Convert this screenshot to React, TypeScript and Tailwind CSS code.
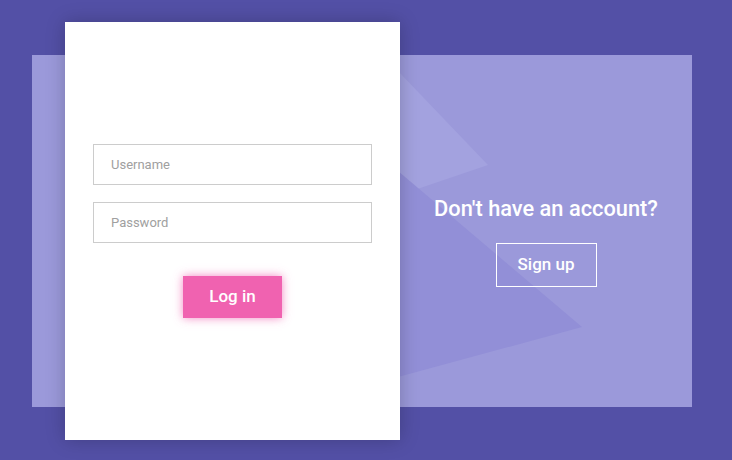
export default function App() {
  return (
    <div
      className="relative w-[732px] h-[460px] bg-[#5350a6] overflow-hidden"
      style={{ fontFamily: "Roboto, 'Liberation Sans', sans-serif" }}
    >
      {/* Light backdrop panel */}
      <div className="relative ml-[32px] mt-[55px] w-[660px] h-[352px] bg-[#9b99da] overflow-hidden">
        <svg className="absolute inset-0" width="660" height="352" viewBox="0 0 660 352">
          <polygon points="300,-53 456,110 300,163" fill="#a3a2df" />
          <polygon points="300,60 550,272 300,340" fill="#928fd7" />
        </svg>
        <div className="relative flex h-full">
          <div className="w-[368px] shrink-0" />
          <div className="flex flex-1 flex-col items-center pt-[140px]">
            <p className="text-[21.8px] font-medium leading-[28px] text-white">Don't have an account?</p>
            <button className="mt-[20px] h-[44px] w-[101px] border border-white text-[17px] font-medium text-white">
              Sign up
            </button>
          </div>
        </div>
      </div>

      {/* Login card */}
      <div className="absolute left-[65px] top-[22px] w-[335px] h-[418px] bg-white px-[28px] pt-[122px] shadow-[0_0_18px_rgba(0,0,0,0.22)]">
        <div className="flex flex-col gap-[17px]">
          <input
            placeholder="Username"
            className="h-[41px] w-full border border-[#cccccc] px-[17px] text-[13px] text-[#555] placeholder:text-[#a0a0a0] outline-none"
          />
          <input
            type="password"
            placeholder="Password"
            className="h-[41px] w-full border border-[#cccccc] px-[17px] text-[13px] text-[#555] placeholder:text-[#a0a0a0] outline-none"
          />
        </div>
        <div className="mt-[33px] flex justify-center">
          <button className="h-[42px] w-[99px] bg-[#f062b0] text-[17px] font-medium text-white shadow-[0_0_9px_rgba(240,98,176,0.75)]">
            Log in
          </button>
        </div>
      </div>
    </div>
  );
}
